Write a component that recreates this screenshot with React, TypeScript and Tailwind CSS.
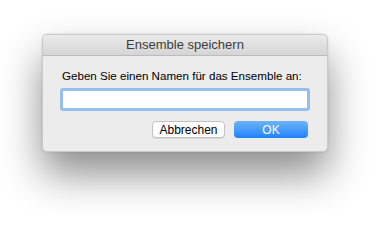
export default function App() {
    return (
        <div className="h-[214px] w-[379px] overflow-hidden bg-white pl-[42px] pt-[34px] font-['Liberation_Sans',Arial,sans-serif]">
            <div className="flex h-[118px] w-[286px] flex-col overflow-hidden rounded-[5px] border border-[#c9c9c9] bg-[#ececec] shadow-[0_22px_40px_rgba(0,0,0,0.45),0_0_2px_rgba(0,0,0,0.15)]">
                <div className="flex h-[21px] shrink-0 items-center justify-center border-b border-[#bcbcbc] bg-gradient-to-b from-[#ebebeb] to-[#d5d5d5] text-[13px] text-[#3c3c3c]">
                    Ensemble speichern
                </div>
                <div className="flex flex-col px-[17px] pt-[12px]">
                    <div className="whitespace-nowrap pl-[2px] text-[11.6px] leading-[16px] text-black">
                        Geben Sie einen Namen für das Ensemble an:
                    </div>
                    <div className="mt-[4px] h-[23px] w-[250px] rounded-[3px] bg-[#97bdf1] p-[3px]">
                        <div className="h-full w-full bg-white" />
                    </div>
                    <div className="mt-[10px] flex justify-end gap-[9px] pr-[2px]">
                        <button className="flex h-[17px] w-[73px] items-center justify-center rounded-[4px] border border-[#c2c2c2] bg-white text-[12px] text-black shadow-[0_1px_0_rgba(0,0,0,0.08)]">
                            Abbrechen
                        </button>
                        <button className="flex h-[17px] w-[74px] items-center justify-center rounded-[4px] bg-gradient-to-b from-[#6cb3fa] to-[#1a82fb] text-[12px] text-white">
                            OK
                        </button>
                    </div>
                </div>
            </div>
        </div>
    );
}
